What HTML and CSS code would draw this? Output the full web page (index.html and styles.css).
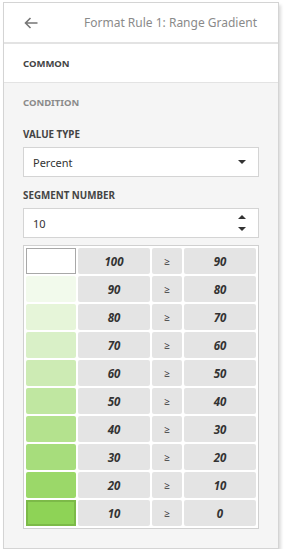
FILE: index.html
```html
<!DOCTYPE html>
<html lang="en">

<head>
  <meta charset="UTF-8">
  <meta name="viewport" content="width=device-width, initial-scale=1.0">
  <title>Format Rule</title>
  <link rel="stylesheet" href="styles.css">
</head>

<body>
  <div class="panel">
    <div class="panel-header">
      <button class="btn-back" type="button">
        <svg width="14" height="12" viewBox="0 0 14 12">
          <path d="M6.5 1 L1.5 6 L6.5 11 M1.5 6 H13.5" fill="none" stroke="#767676" stroke-width="1.6"/>
        </svg>
      </button>
      <span class="panel-title">Format Rule 1: Range Gradient</span>
    </div>

    <div class="panel-tab">COMMON</div>

    <div class="panel-body">
      <div class="section-title">CONDITION</div>

      <div class="form-group">
        <label class="field-label">VALUE TYPE</label>
        <div class="field">
          <span>Percent</span>
          <span class="caret-down"></span>
        </div>
      </div>

      <div class="form-group">
        <label class="field-label">SEGMENT NUMBER</label>
        <div class="field">
          <span>10</span>
          <span class="spin">
            <span class="caret-up"></span>
            <span class="caret-down"></span>
          </span>
        </div>
      </div>

      <div class="ranges" id="ranges"></div>
    </div>
  </div>

  <script>
    // build the gradient rows: white -> green
    const ranges = document.getElementById('ranges');
    const from = [255, 255, 255];
    const to = [142, 211, 86];

    for (let i = 0; i < 10; i++) {
      const t = i / 9;
      const rgb = from.map((c, k) => Math.round(c + (to[k] - c) * t));

      const swatch = document.createElement('div');
      swatch.className = 'swatch';
      if (i === 0) swatch.classList.add('swatch-first');
      if (i === 9) swatch.classList.add('swatch-last');
      swatch.style.background = 'rgb(' + rgb.join(',') + ')';
      ranges.appendChild(swatch);

      const cells = [100 - i * 10, '≥', 90 - i * 10];
      cells.forEach((text, k) => {
        const cell = document.createElement('div');
        cell.className = k === 1 ? 'cell cell-op' : 'cell';
        cell.textContent = text;
        ranges.appendChild(cell);
      });
    }
  </script>
</body>

</html>
```

FILE: styles.css
```css
body {
  margin: 0;
  background: #fff;
  font-family: "Noto Sans", "Open Sans", sans-serif;
  color: #333;
}

.panel {
  width: 274px;
  height: 545px;
  margin: 2px 0 0 3px;
  border: 1px solid #d4d4d4;
  background: #f5f5f5;
  box-shadow: 2px 3px 3px rgba(0, 0, 0, 0.14);
}

.panel-header {
  height: 39px;
  display: flex;
  align-items: center;
  background: #fff;
  border-bottom: 2px solid #e3e3e3;
}

.btn-back {
  width: 60px;
  height: 39px;
  padding: 0 0 0 20px;
  border: none;
  background: none;
  display: flex;
  align-items: center;
}

.panel-title {
  margin-left: 20px;
  font-size: 12px;
  color: #8a8a8a;
  white-space: nowrap;
}

.panel-tab {
  height: 38px;
  padding-left: 19px;
  display: flex;
  align-items: center;
  background: #fff;
  border-bottom: 1px solid #e3e3e3;
  font-size: 9.5px;
  font-weight: 700;
  color: #444;
}

.panel-body {
  padding: 13px 19px 0;
}

.section-title {
  line-height: 14px;
  font-size: 9.5px;
  font-weight: 700;
  color: #8a8a8a;
}

.form-group {
  margin-top: 18px;
}

.form-group + .form-group {
  margin-top: 12px;
}

.field-label {
  display: block;
  line-height: 14px;
  margin-bottom: 5px;
  font-size: 9.8px;
  font-weight: 700;
  color: #444;
}

.field {
  height: 28px;
  padding: 0 12px 0 9px;
  display: flex;
  align-items: center;
  justify-content: space-between;
  background: #fff;
  border: 1px solid #d4d4d4;
  font-size: 11px;
  color: #333;
}

.caret-down,
.caret-up {
  width: 0;
  height: 0;
  border-left: 4px solid transparent;
  border-right: 4px solid transparent;
}

.caret-down {
  border-top: 4px solid #333;
}

.caret-up {
  border-bottom: 4px solid #333;
}

.spin {
  display: flex;
  flex-direction: column;
  gap: 8px;
}

.ranges {
  margin-top: 7px;
  padding: 2px;
  display: grid;
  grid-template-columns: 50px 72px 30px 72px;
  grid-auto-rows: 26px;
  gap: 2px;
  background: #fff;
  border: 1px solid #d0d0d0;
}

.swatch {
  box-sizing: border-box;
  border-radius: 2px;
}

.swatch-first {
  border: 1px solid #a8a8a8;
  border-radius: 0;
}

.swatch-last {
  border: 2px solid #7cba48;
  border-radius: 0;
}

.cell {
  display: flex;
  align-items: center;
  justify-content: center;
  background: #e4e4e4;
  border-radius: 2px;
  font-size: 11.5px;
  font-weight: 700;
  font-style: italic;
  color: #333;
}

.cell-op {
  font-size: 10px;
  font-weight: 400;
  font-style: normal;
}
```
